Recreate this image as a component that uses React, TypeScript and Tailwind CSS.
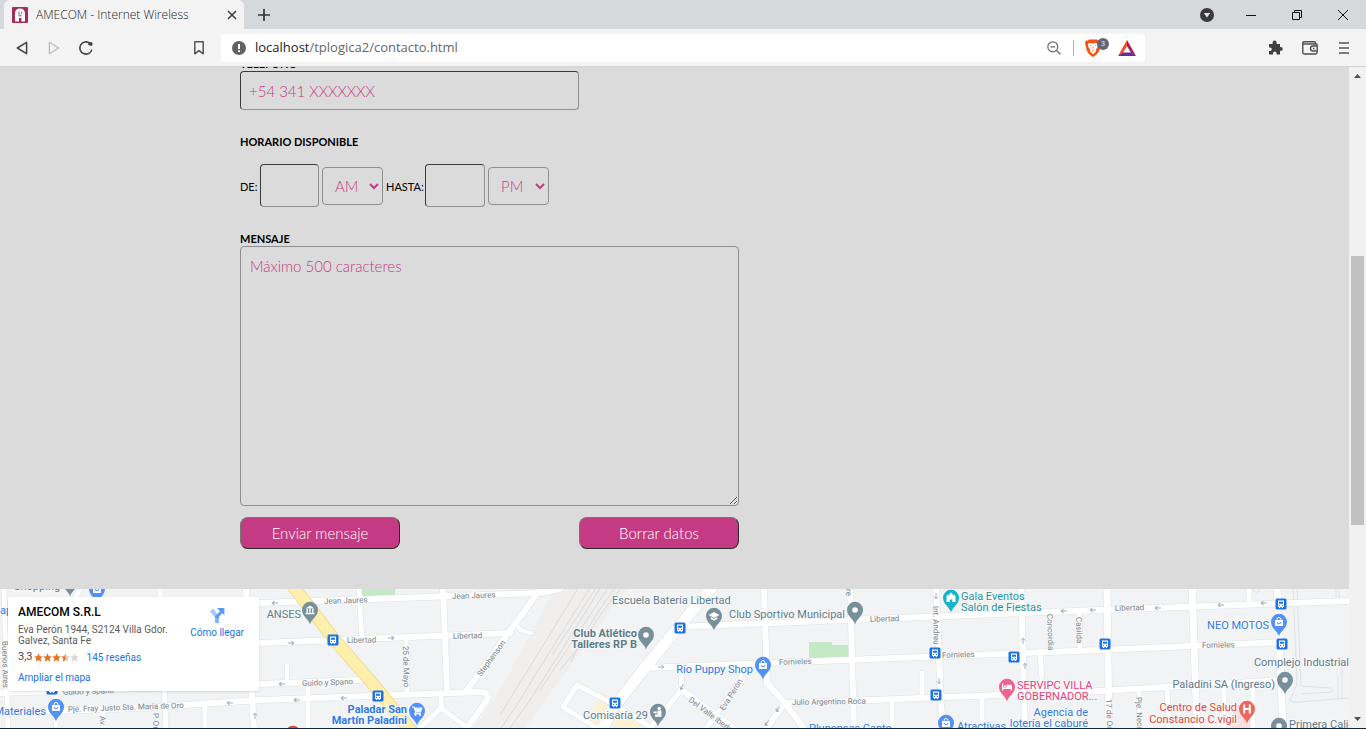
import type { ReactNode } from 'react';

type Point = [number, number];

const STREETS: { d: string; w: number }[] = [
  { d: 'M0 612 L260 603 L540 593 L560 589', w: 6 },
  { d: 'M0 655 L260 643 L510 633', w: 6 },
  { d: 'M443 589 L447 690', w: 6 },
  { d: 'M359 589 L362 640', w: 5 },
  { d: 'M406 640 L407 693', w: 5 },
  { d: 'M0 693 L260 684 L360 680', w: 6 },
  { d: 'M287 665 V684', w: 4 },
  { d: 'M0 713 L140 708 L260 700 L480 692 Q490 692 487 700 L467 728', w: 6 },
  { d: 'M308 685 V730', w: 5 },
  { d: 'M544 584 L467 690', w: 6 },
  { d: 'M508 632 L517 625 L520 630 L531 633', w: 4 },
  { d: 'M441 693 V708 L418 730 M441 708 L470 730', w: 5 },
  { d: 'M4 589 L8 730', w: 5 },
  { d: 'M160 589 L166 730', w: 5 },
  { d: 'M246 589 L254 730', w: 6 },
  { d: 'M103 708 V730 M205 704 V730', w: 5 },
  { d: 'M84 580 L56 640 V730', w: 5 },
  { d: 'M577 685 L615 705 L655 730 M577 685 L563 707 L600 730', w: 5 },
  { d: 'M677 627 L820 621 L1100 610 L1349 601', w: 6 },
  { d: 'M764 589 L767 683 L785 703 L805 730', w: 6 },
  { d: 'M645 668 L820 661 L1100 650 L1283 642', w: 6 },
  { d: 'M785 703 L820 702 L1100 691 L1283 680', w: 6 },
  { d: 'M785 703 L765 730', w: 6 },
  { d: 'M682 670 L681 690 L663 713 L648 730', w: 5 },
  { d: 'M682 690 L736 730', w: 6 },
  { d: 'M741 670 V680 L705 730', w: 5 },
  { d: 'M850 585 L854 730', w: 6 },
  { d: 'M936 585 L941 706 L944 730', w: 6 },
  { d: 'M1021 585 L1025 730', w: 6 },
  { d: 'M1079 612 L1080 650', w: 5 },
  { d: 'M922 673 V697', w: 5 },
  { d: 'M892 702 V730 M982 697 V730', w: 5 },
  { d: 'M1040 653 L1043 692', w: 5 },
  { d: 'M1107 585 L1109 730', w: 7 },
  { d: 'M1192 585 L1197 730', w: 7 },
  { d: 'M1249 585 V603', w: 5 },
  { d: 'M1277 585 L1283 730', w: 7 },
  { d: 'M1139 689 V730 M1167 688 L1169 730 M1224 685 V730 M1253 683 V730', w: 5 },
];

const AVENUE = 'M716 582 L643 670 L612 710 L602 730';
const ROUTE = 'M290 582 L333 638 L378 690 L412 732';

const BUS_STOPS: Point[] = [
  [333, 640], [378, 696], [680, 628], [615, 703], [935, 653], [1014, 657],
  [936, 695], [1105, 644], [1281, 604], [1282, 644], [52, 689],
];

type Glyph = 'dot' | 'bank' | 'cart' | 'cap' | 'bag' | 'person' | 'castle' | 'bed' | 'hospital' | 'none';

const PINS: { x: number; y: number; color: string; glyph: Glyph }[] = [
  { x: 70, y: 582, color: '#78909c', glyph: 'none' },
  { x: 97, y: 589, color: '#5491f5', glyph: 'bag' },
  { x: 56, y: 707, color: '#5491f5', glyph: 'bag' },
  { x: 293, y: 734, color: '#ea4335', glyph: 'none' },
  { x: 310, y: 610, color: '#78909c', glyph: 'bank' },
  { x: 417, y: 711, color: '#5491f5', glyph: 'cart' },
  { x: 646, y: 635, color: '#78909c', glyph: 'dot' },
  { x: 714, y: 616, color: '#78909c', glyph: 'cap' },
  { x: 763, y: 665, color: '#5491f5', glyph: 'bag' },
  { x: 658, y: 712, color: '#78909c', glyph: 'person' },
  { x: 855, y: 610, color: '#78909c', glyph: 'dot' },
  { x: 951, y: 598, color: '#12b5cb', glyph: 'castle' },
  { x: 1007, y: 687, color: '#f06292', glyph: 'bed' },
  { x: 946, y: 723, color: '#5491f5', glyph: 'bag' },
  { x: 1279, y: 622, color: '#5491f5', glyph: 'bag' },
  { x: 1285, y: 680, color: '#78909c', glyph: 'dot' },
  { x: 1247, y: 709, color: '#ee675c', glyph: 'hospital' },
  { x: 1279, y: 726, color: '#78909c', glyph: 'dot' },
];

const GLYPHS: Record<Glyph, ReactNode> = {
  none: null,
  dot: <circle r="2.8" fill="#fff" />,
  bank: <path d="M-4.5 -1.5 L0 -4.5 L4.5 -1.5 Z M-3.5 -1 h1.4 v4 h-1.4z M-0.7 -1 h1.4 v4 h-1.4z M2.1 -1 h1.4 v4 h-1.4z M-4.5 3 h9 v1.3 h-9z" fill="#fff" />,
  cart: (
    <g>
      <path d="M-5 -4 h2 l1.8 5 h4.6 l1.4 -4 h-7.6 M-1.2 1 l-1 1.6 h6" fill="none" stroke="#fff" strokeWidth="1.2" />
      <path d="M-2.5 -2.5 h7 l-1.2 3.2 h-4.6z" fill="#fff" />
      <circle cx="-1.5" cy="4" r="1" fill="#fff" />
      <circle cx="3" cy="4" r="1" fill="#fff" />
    </g>
  ),
  cap: <path d="M-5.5 -1 L0 -4 L5.5 -1 L0 2 Z M-3.2 1 L0 2.9 L3.2 1 V3 L0 4.8 L-3.2 3 Z" fill="#fff" />,
  bag: (
    <g>
      <path d="M-4 -2 h8 v6 h-8z" fill="#fff" />
      <path d="M-1.9 -2 v-0.6 a1.9 1.9 0 0 1 3.8 0 V-2" fill="none" stroke="#fff" strokeWidth="1" />
      <path d="M-1.8 0 a1.8 1.8 0 0 0 3.6 0" fill="none" stroke="#5491f5" strokeWidth="1" />
    </g>
  ),
  person: (
    <g fill="#fff">
      <circle cx="1.2" cy="-3.6" r="1.7" />
      <path d="M-0.6 -1.6 H3.4 V4.8 H-3 V2.4 H-0.6z M-4.6 -0.4 H-1.2 V1.2 H-4.6z" />
    </g>
  ),
  castle: <path d="M-4.5 4 V-2 l1.5 -1.4 l1.3 1.4 V-4 L0 -5.4 L1.7 -4 v2 L3 -3.4 L4.5 -2 V4 H1.2 V1.4 h-2.4 V4z" fill="#fff" />,
  bed: <path d="M-5 -3.5 h1.2 V0.6 h3.3 V-2.2 H3.6 a1.4 1.4 0 0 1 1.4 1.4 V3.6 H3.8 V1.9 h-7.6 v1.7 h-1.2z M-2.2 -1.8 a1 1 0 1 1 0 2 a1 1 0 1 1 0 -2" fill="#fff" />,
  hospital: <path d="M-3.8 -4.5 h2 v3.5 h3.6 v-3.5 h2 v9 h-2 V0.9 h-3.6 v3.6 h-2z" fill="#fff" />,
};

const ARROWS: { x: number; y: number; r: number }[] = [
  { x: 275, y: 603, r: 178 }, { x: 291, y: 643, r: -2 }, { x: 391, y: 638, r: -2 },
  { x: 282, y: 684, r: 178 }, { x: 297, y: 700, r: 178 }, { x: 344, y: 698, r: 178 },
  { x: 230, y: 703, r: 178 }, { x: 255, y: 716, r: -90 }, { x: 661, y: 667, r: 0 },
  { x: 682, y: 687, r: 115 }, { x: 778, y: 709, r: 125 }, { x: 767, y: 723, r: 125 },
  { x: 936, y: 596, r: 90 }, { x: 939, y: 681, r: 90 }, { x: 1023, y: 641, r: -90 },
  { x: 1025, y: 666, r: -90 }, { x: 1064, y: 611, r: 178 }, { x: 1093, y: 610, r: 178 },
  { x: 1158, y: 608, r: 178 }, { x: 1221, y: 605, r: 178 }, { x: 1264, y: 603, r: 178 },
];

type Label = { t: string; x: number; y: number; s: number; c: string; r?: number; a?: 'start' | 'middle' | 'end'; b?: boolean };

const GRAY = '#80868b';
const SLATE = '#5f7c8a';
const BLUE = '#3379e8';

const LABELS: Label[] = [
  { t: 'Jean Jaures', x: 324, y: 604, s: 8, c: GRAY, r: -2 },
  { t: 'Jean Jaures', x: 452, y: 599, s: 8, c: GRAY, r: -2 },
  { t: 'Libertad', x: 347, y: 643, s: 8, c: GRAY, r: -1 },
  { t: 'Libertad', x: 453, y: 639, s: 8, c: GRAY, r: -2 },
  { t: 'Guido y Spano', x: 302, y: 686, s: 8, c: GRAY, r: -2 },
  { t: 'Guido y Spano', x: 63, y: 695, s: 8, c: GRAY, r: -2 },
  { t: 'Pje. Fray Justo Sta. María de Oro', x: 68, y: 712, s: 8, c: GRAY, r: -2 },
  { t: '25 de Mayo', x: 403, y: 646, s: 8, c: GRAY, r: 89 },
  { t: 'Stephenson', x: 481, y: 677, s: 8, c: GRAY, r: -54 },
  { t: 'Buenos Aires', x: 2, y: 641, s: 8, c: GRAY, r: 89 },
  { t: 'Av. Perón', x: 100, y: 716, s: 8, c: GRAY, r: 89 },
  { t: 'P. Oro', x: 153, y: 713, s: 8, c: GRAY, r: 89 },
  { t: 'Eva Perón', x: 724, y: 711, s: 8, c: GRAY, r: -58 },
  { t: 'Del Valle Iberlucea', x: 688, y: 701, s: 8, c: GRAY, r: 37 },
  { t: 'Fornieles', x: 779, y: 665, s: 8, c: GRAY, r: -2 },
  { t: 'Julio Argentino Roca', x: 792, y: 705, s: 8, c: GRAY, r: -1 },
  { t: 'Libertad', x: 870, y: 622, s: 8, c: GRAY, r: -2 },
  { t: 'Fornieles', x: 942, y: 658, s: 8, c: GRAY, r: -2 },
  { t: 're', x: 846, y: 589, s: 8, c: GRAY, r: 89 },
  { t: 'Int. Andreu', x: 933, y: 606, s: 8, c: GRAY, r: 89 },
  { t: 'Concordia', x: 1047, y: 614, s: 8, c: GRAY, r: 88 },
  { t: 'Casilda', x: 1076, y: 617, s: 8, c: GRAY, r: 88 },
  { t: 'Libertad', x: 1115, y: 611, s: 8, c: GRAY, r: -2 },
  { t: 'Fornieles', x: 1202, y: 648, s: 8, c: GRAY, r: -1 },
  { t: '17 de Octubre', x: 1106, y: 699, s: 8, c: GRAY, r: 88 },
  { t: 'Pje. Necochea', x: 1136, y: 697, s: 8, c: GRAY, r: 88 },
  { t: 'Shopping', x: 14, y: 590, s: 11, c: SLATE },
  { t: 'ap', x: 0, y: 614, s: 11, c: BLUE },
  { t: 'Materiales', x: 46, y: 715, s: 11, c: BLUE, a: 'end' },
  { t: 'ANSES', x: 301, y: 618, s: 11, c: SLATE, a: 'end' },
  { t: 'Paladar San', x: 407, y: 713, s: 11, c: BLUE, a: 'end', b: true },
  { t: 'Martín Paladini', x: 407, y: 724, s: 11, c: BLUE, a: 'end', b: true },
  { t: 'Escuela Batería Libertad', x: 612, y: 604, s: 11, c: SLATE },
  { t: 'Club Atlético', x: 637, y: 637, s: 11, c: SLATE, a: 'end', b: true },
  { t: 'Talleres RP B', x: 637, y: 648, s: 11, c: SLATE, a: 'end', b: true },
  { t: 'Club Sportivo Municipal', x: 845, y: 618, s: 11, c: SLATE, a: 'end' },
  { t: 'Río Puppy Shop', x: 753, y: 673, s: 11, c: BLUE, a: 'end' },
  { t: 'Comisaría 29', x: 648, y: 719, s: 11, c: SLATE, a: 'end' },
  { t: 'Plupensas Canto', x: 809, y: 732, s: 11, c: BLUE },
  { t: 'Gala Eventos', x: 961, y: 600, s: 11, c: '#1f949e' },
  { t: 'Salón de Fiestas', x: 961, y: 611, s: 11, c: '#1f949e' },
  { t: 'SERVIPC VILLA', x: 1017, y: 689, s: 11, c: '#e8407c' },
  { t: 'GOBERNADOR...', x: 1017, y: 700, s: 11, c: '#e8407c' },
  { t: 'Agencia de', x: 1088, y: 716, s: 11, c: BLUE, a: 'end' },
  { t: 'lotería el caburé', x: 1088, y: 727, s: 11, c: BLUE, a: 'end' },
  { t: 'Atractivas', x: 957, y: 730, s: 11, c: BLUE },
  { t: 'NEO MOTOS', x: 1269, y: 629, s: 11, c: BLUE, a: 'end' },
  { t: 'Complejo Industrial', x: 1349, y: 666, s: 11, c: SLATE, a: 'end' },
  { t: 'Paladini SA (Ingreso)', x: 1275, y: 688, s: 11, c: SLATE, a: 'end' },
  { t: 'Centro de Salud', x: 1237, y: 711, s: 11, c: '#e2453a', a: 'end' },
  { t: 'Constancio C.vigil', x: 1237, y: 723, s: 11, c: '#e2453a', a: 'end' },
  { t: 'Primera Calidad', x: 1289, y: 728, s: 11, c: SLATE },
];

const RAILS = [
  'M580 585 Q556 625 500 715',
  'M592 585 Q566 625 520 700 L490 745',
  'M602 585 Q575 630 530 700 L505 735',
  'M610 585 Q580 630 540 690',
  'M617 585 Q590 620 571 662',
  'M624 585 Q600 612 585 640 L560 670',
  'M598 585 L552 655',
];

function MapDrawing() {
  return (
    <svg
      className="block h-full w-full"
      viewBox="0 589 1349 139"
      preserveAspectRatio="xMidYMid slice"
      role="img"
      aria-label="Mapa"
      fontFamily="Roboto, sans-serif"
    >
      <rect x="0" y="580" width="1349" height="160" fill="#f1f3f4" />
      <path d="M560 580 H634 L600 625 L560 680 L520 735 H470 L500 690 Z" fill="#f1efed" />
      <path d="M603 692 L612 700 L603 730 H585 L592 712z M622 708 L645 722 L640 730 H612z" fill="#fdf1d3" />
      <path d="M362 588 h33 v8 h-33z M809 642 h23 v3 h18 v13 l-41 1z" fill="#c5e8c5" />
      <path d="M1235 705 h18 v25 h-22z" fill="#fbe0dd" />
      <g fill="none" stroke="#d3d7da" strokeWidth="0.9">
        {RAILS.map((d) => <path key={d} d={d} />)}
      </g>
      <g fill="none" stroke="#dfe2e5" strokeWidth="1">
        <path d="M1293 589 L1297 684 L1290 700 Q1291 703 1298 702 L1349 698" />
        <path d="M1297 589 L1301 686 L1330 688 Q1335 690 1331 692 L1302 694 M1336 589 V602 M1339 589 V600 M1338 675 V698 M1342 668 V698 M1253 589 Q1256 596 1260 589" />
      </g>
      <g fill="none" stroke="#dde0e3" strokeLinecap="round" strokeLinejoin="round">
        {STREETS.map((s) => <path key={s.d} d={s.d} strokeWidth={s.w + 1} />)}
        <path d={AVENUE} strokeWidth="12" />
      </g>
      <g fill="none" stroke="#ffffff" strokeLinecap="round" strokeLinejoin="round">
        {STREETS.map((s) => <path key={s.d} d={s.d} strokeWidth={s.w} />)}
        <path d={AVENUE} strokeWidth="11" />
      </g>
      <path d={ROUTE} fill="none" stroke="#f5dc93" strokeWidth="13" />
      <path d={ROUTE} fill="none" stroke="#fdefac" strokeWidth="11" />
      {ARROWS.map((a) => (
        <path
          key={`${a.x}-${a.y}`}
          transform={`translate(${a.x} ${a.y}) rotate(${a.r})`}
          d="M-3 0 H2.6 M0.6 -2 L2.8 0 L0.6 2"
          fill="none"
          stroke="#a3acc4"
          strokeWidth="1"
        />
      ))}
      {BUS_STOPS.map(([x, y]) => (
        <g key={`${x}-${y}`} transform={`translate(${x} ${y})`}>
          <rect x="-5.5" y="-5.5" width="11" height="11" rx="1.5" fill="#1a73e8" />
          <path d="M-3 -3.5 h6 v6.5 h-1 v1 h-1.2 v-1 h-1.6 v1 h-1.2 v-1 h-1z" fill="#fff" />
          <path d="M-2 -2.2 h4 v2 h-4z M-2 1 h1 v1 h-1z M1 1 h1 v1 h-1z" fill="#1a73e8" />
        </g>
      ))}
      {PINS.map((p) => (
        <g key={`${p.x}-${p.y}`} transform={`translate(${p.x} ${p.y})`}>
          <path d="M0 14.5 C-1 9.5 -8 6.5 -8 -0.2 A8 8 0 0 1 8 -0.2 C8 6.5 1 9.5 0 14.5z" fill={p.color} />
          {GLYPHS[p.glyph]}
        </g>
      ))}
      {LABELS.map((l) => (
        <text
          key={`${l.t}-${l.x}`}
          transform={`translate(${l.x} ${l.y}) rotate(${l.r ?? 0})`}
          fontSize={l.s}
          fill={l.c}
          fontWeight={l.b ? 700 : 400}
          textAnchor={l.a ?? 'start'}
          stroke="#f7f8f9"
          strokeWidth="2"
          paintOrder="stroke"
        >
          {l.t}
        </text>
      ))}
    </svg>
  );
}

function Star({ fill }: { fill: string }) {
  return (
    <svg viewBox="0 0 10 10" className="size-[9px]" aria-hidden="true">
      <path d="M5 0.3 L6.4 3.5 L9.9 3.8 L7.3 6.1 L8.1 9.6 L5 7.7 L1.9 9.6 L2.7 6.1 L0.1 3.8 L3.6 3.5z" fill={fill} />
    </svg>
  );
}

function InfoCard() {
  return (
    <div className="absolute top-2 left-2 flex h-[94px] w-[251px] justify-between rounded-xs bg-white pt-2 pr-[15px] pl-[10px] font-[Roboto,sans-serif] text-[10px] shadow-sm">
      <div>
        <h2 className="text-[12px] leading-[14px] font-medium text-black">AMECOM S.R.L</h2>
        <p className="mt-[5px] w-[152px] text-[10px] leading-[11px] text-[#5b5b5b]">Eva Perón 1944, S2124 Villa Gdor. Galvez, Santa Fe</p>
        <div className="mt-[3px] flex h-4 items-center">
          <span className="mr-px text-[11px] text-[#444]">3,3</span>
          <Star fill="#e7711b" />
          <Star fill="#e7711b" />
          <Star fill="#e7711b" />
          <svg viewBox="0 0 10 10" className="size-[9px]" aria-hidden="true">
            <path d="M5 0.3 L6.4 3.5 L9.9 3.8 L7.3 6.1 L8.1 9.6 L5 7.7z" fill="#d0d0d0" />
            <path d="M5 0.3 L3.6 3.5 L0.1 3.8 L2.7 6.1 L1.9 9.6 L5 7.7z" fill="#e7711b" />
          </svg>
          <Star fill="#d8d8d8" />
          <a href="#resenas" className="ml-2 text-[#1a73e8]">145 reseñas</a>
        </div>
        <a href="#mapa" className="mt-[6px] block leading-[14px] text-[#1a73e8]">Ampliar el mapa</a>
      </div>
      <a href="#ruta" className="flex flex-col items-center gap-[3px] pt-[2px] text-[#1a73e8]">
        <svg viewBox="0 0 16 16" className="size-4" aria-hidden="true">
          <path d="M6 16 V10.5 L0.8 4.2 L3.8 1.6 L8.6 7.2 L10 9 V16z" fill="#a6c8f8" />
          <path d="M6 16 V9.4 L11 4.2 L8 1 H15.4 V8 L13 6.2 L10 9.8 V16z" fill="#5b9af5" />
          <path d="M6 16 V11 h4 V16z" fill="#8ab8f7" />
        </svg>
        <span className="leading-[14px]">Cómo llegar</span>
      </a>
    </div>
  );
}

function TabStrip() {
  return (
    <div className="flex h-[29px] shrink-0 items-stretch bg-[#d5d9dc] pl-1">
      <div className="flex w-60 items-center rounded-t-md bg-[#f3f3f3] pr-[7px] pl-2">
        <svg viewBox="0 0 16 16" className="size-4" aria-hidden="true">
          <rect width="16" height="16" rx="1" fill="#a62c56" />
          <path d="M3 14.4 V6.4 Q3.2 1.6 8 1.6 Q12.8 1.6 13 6.4 V14.4 H9.4 V11 H7 V14.4z" fill="#fff" />
          <path d="M6.6 4.8 h0.9 v4.4 h-0.9z M9 4.8 h0.8 v2 h-0.8z M8.2 8 h1.2 v1.6 h-1.2z" fill="#a62c56" />
        </svg>
        <span className="ml-2 flex-1 text-[12px] font-light whitespace-nowrap text-[#1c1c1c]">AMECOM - Internet Wireless</span>
        <button type="button" aria-label="Cerrar pestaña" className="size-[10px]">
          <svg viewBox="0 0 10 10"><path d="M1 1 L9 9 M9 1 L1 9" stroke="#3a3a3a" strokeWidth="1.5" /></svg>
        </button>
      </div>
      <button type="button" aria-label="Nueva pestaña" className="ml-[14px] w-3">
        <svg viewBox="0 0 12 12" className="size-3"><path d="M6 0 V12 M0 6 H12" stroke="#333" strokeWidth="1.7" /></svg>
      </button>
      <div className="ml-auto flex items-center pr-[18px]">
        <button type="button" aria-label="Buscar pestañas">
          <svg viewBox="0 0 14 14" className="size-[14px]"><circle cx="7" cy="7" r="7" fill="#3b3b3b" /><path d="M3.8 5 H10.2 L7 9.4z" fill="#e4e6e8" /></svg>
        </button>
        <button type="button" aria-label="Minimizar" className="ml-8">
          <svg viewBox="0 0 10 10" className="size-[10px]"><path d="M0 5.5 H10" stroke="#111" /></svg>
        </button>
        <button type="button" aria-label="Restaurar" className="ml-9">
          <svg viewBox="0 0 10 10" className="size-[10px]"><path d="M0.5 2.5 h7 v7 h-7z M2.5 2.5 V0.5 h7 v7 h-2" fill="none" stroke="#111" /></svg>
        </button>
        <button type="button" aria-label="Cerrar" className="ml-9">
          <svg viewBox="0 0 10 10" className="size-[10px]"><path d="M0 0 L10 10 M10 0 L0 10" stroke="#111" /></svg>
        </button>
      </div>
    </div>
  );
}

function Toolbar() {
  return (
    <div className="flex h-[38px] shrink-0 items-center border-b border-[#d6d6d6] bg-[#f3f3f3] pl-4">
      <button type="button" aria-label="Atrás">
        <svg viewBox="0 0 12 14" className="h-[14px] w-3"><path d="M10.6 1.3 V12.7 L1.3 7z" fill="none" stroke="#444" strokeWidth="1.5" strokeLinejoin="round" /></svg>
      </button>
      <button type="button" aria-label="Adelante" className="ml-5">
        <svg viewBox="0 0 12 14" className="h-[14px] w-3"><path d="M1.4 1.3 V12.7 L10.7 7z" fill="none" stroke="#bcbcbc" strokeWidth="1.3" strokeLinejoin="round" /></svg>
      </button>
      <button type="button" aria-label="Recargar" className="ml-[19px]">
        <svg viewBox="0 0 14 14" className="size-[14px]">
          <path d="M12.9 8.6 A6.1 6.1 0 1 1 10.8 2.2" fill="none" stroke="#444" strokeWidth="1.6" />
          <path d="M8.8 3.6 L10 1.4 Q13.6 0 13.6 3 Q13.4 5.4 11.4 4.8z" fill="#444" />
        </svg>
      </button>
      <button type="button" aria-label="Marcador" className="ml-[101px]">
        <svg viewBox="0 0 10 14" className="h-[14px] w-[10px]"><path d="M0.8 0.8 H9.2 V12.8 L5 9.6 L0.8 12.8z" fill="none" stroke="#555" strokeWidth="1.5" strokeLinejoin="round" /></svg>
      </button>
      <div className="ml-[17px] flex h-7 flex-1 items-center rounded-sm bg-white pr-[9px] pl-[11px]">
        <svg viewBox="0 0 14 14" className="size-[14px] shrink-0" aria-hidden="true">
          <circle cx="7" cy="7" r="7" fill="#5f6368" />
          <path d="M6 3 H8 V8 H6z M6 9.2 H8 V11 H6z" fill="#fff" />
        </svg>
        <a href="#url" className="ml-[9px] flex-1 text-[13px] whitespace-nowrap text-[#666]">
          <span className="text-[#222]">localhost</span>/tplogica2/contacto.html
        </a>
        <svg viewBox="0 0 14 14" className="size-[14px] shrink-0" aria-hidden="true">
          <circle cx="5.8" cy="5.8" r="5" fill="none" stroke="#6b6b6b" strokeWidth="1.2" />
          <path d="M3.4 5.8 H8.2 M9.5 9.5 L13.5 13.3" stroke="#6b6b6b" strokeWidth="1.3" />
        </svg>
        <span className="ml-3 h-4 w-px bg-[#b4b4b4]" />
        <div className="relative ml-[11px] h-[18px] w-4">
          <svg viewBox="0 0 16 18" className="h-[18px] w-4" aria-hidden="true">
            <path d="M4 0.4 H12 L13.4 1.8 L15.2 1.6 L16 4 L15.2 7 Q14.6 12 13 14 Q11 16.4 8 18 Q5 16.4 3 14 Q1.4 12 0.8 7 L0 4 L0.8 1.6 L2.6 1.8z" fill="#fb5012" />
            <path d="M3 4.4 L5.6 4 L8 4.6 L10.4 4 L13 4.4 L12.6 8 L10.8 10.8 L11 12.4 L8 15.2 L5 12.4 L5.2 10.8 L3.4 8z" fill="#fff" />
            <path d="M4.6 6 L6.8 6.5 L6 7.3z M11.4 6 L9.2 6.5 L10 7.3z M7.6 7.4 h0.8 v2.2 H7.6z M6.2 11 L8 11.8 L9.8 11 L8 12.8z" fill="#fb6a35" />
          </svg>
          <span className="absolute -top-px left-3 flex size-3 items-center justify-center rounded-md bg-[#63657a] text-[7px] leading-none text-white">3</span>
        </div>
        <svg viewBox="0 0 18 16" className="ml-[17px] h-4 w-[18px] shrink-0" aria-hidden="true">
          <path d="M9 0 L0 16 L5 12.8 L9 6z" fill="#ff4724" />
          <path d="M9 0 L18 16 L13 12.8 L9 6z" fill="#9e1f63" />
          <path d="M0 16 L5 12.6 H13 L18 16z" fill="#662d91" />
        </svg>
      </div>
      <div className="ml-[123px] flex items-center pr-[17px]">
        <button type="button" aria-label="Extensiones">
          <svg viewBox="0 0 15 15" className="size-[15px]">
            <path d="M1 4 H4.6 V2.4 A2 2 0 0 1 8.6 2.4 V4 H12 V7 H12.8 A1.9 1.9 0 0 1 12.8 10.8 H12 V14.6 H8.6 V13.4 A1.8 1.8 0 0 0 5 13.4 V14.6 H1 V11 H2 A1.8 1.8 0 0 0 2 7.4 H1z" fill="#3f3f3f" />
          </svg>
        </button>
        <button type="button" aria-label="Cartera" className="ml-[19px]">
          <svg viewBox="0 0 16 14" className="h-[14px] w-4" fill="none" stroke="#505050" strokeWidth="1.4">
            <path d="M15 4.6 V3.6 Q15 3 14.2 3 H2 Q0.8 3 0.8 1.9 Q0.8 0.8 2 0.8 H12.4 Q13.4 0.8 13.4 1.8 V3 M0.8 1.9 V11.6 Q0.8 13 2.2 13 H13.6 Q15 13 15 11.6 V10.4" />
            <path d="M15.2 5 H11 A2.5 2.5 0 0 0 11 10 H15.2z M11 7.5 H12.4" />
          </svg>
        </button>
        <button type="button" aria-label="Menú" className="ml-[21px]">
          <svg viewBox="0 0 10 12" className="h-3 w-[10px]"><path d="M0 1 H10 M0 6 H10 M0 11 H10" stroke="#555" strokeWidth="1.5" /></svg>
        </button>
      </div>
    </div>
  );
}

const FIELD = 'rounded-[4px] border border-t-[#3b3b3b] border-r-[#8f8f8f] border-b-[#8f8f8f] border-l-[#3b3b3b] bg-transparent px-2 text-[15px] font-light text-[#c53b83] outline-none placeholder:text-[#c53b83] placeholder:opacity-100';
const SELECT = 'h-[38px] w-[61px] rounded-[4px] border border-[#8f8f8f] bg-transparent px-2 text-[15px] font-light text-[#c53b83]';
const BUTTON = 'h-8 w-40 rounded-lg border border-t-[#767676] border-r-[#2a2a2a] border-b-[#2a2a2a] border-l-[#767676] bg-[#c53b83] text-[15px] font-light text-white';

function ContactForm() {
  return (
    <form className="mx-auto w-full max-w-[869px] pb-10 text-[11px] text-black" onSubmit={(e) => e.preventDefault()}>
      <div className="flex h-1 items-end overflow-hidden">
        <label htmlFor="telefono" className="leading-[15px] font-bold">TELÉFONO</label>
      </div>
      <input id="telefono" type="tel" placeholder="+54 341 XXXXXXX" className={`block h-[39px] w-[339px] ${FIELD}`} />
      <h3 className="mt-6 leading-4 font-bold">HORARIO DISPONIBLE</h3>
      <div className="mt-[14px] flex items-center gap-[3px]">
        <label htmlFor="desde" className="w-[17px] pt-[3px] whitespace-nowrap">DE:</label>
        <input id="desde" type="text" className={`h-[43px] w-[59px] ${FIELD}`} />
        <select aria-label="Turno desde" defaultValue="AM" className={SELECT}>
          <option>AM</option>
          <option>PM</option>
        </select>
        <label htmlFor="hasta" className="w-9 pt-[3px] whitespace-nowrap">HASTA:</label>
        <input id="hasta" type="text" className={`h-[43px] w-[60px] ${FIELD}`} />
        <select aria-label="Turno hasta" defaultValue="PM" className={SELECT}>
          <option>AM</option>
          <option>PM</option>
        </select>
      </div>
      <label htmlFor="mensaje" className="mt-6 block leading-[15px] font-bold">MENSAJE</label>
      <textarea
        id="mensaje"
        placeholder="Máximo 500 caracteres"
        className="block h-[260px] w-[499px] resize rounded-[4px] border border-[#8f8f8f] bg-transparent px-[9px] py-[9px] text-[15px] leading-5 font-light text-[#c53b83] placeholder:text-[#c53b83] placeholder:opacity-100"
      />
      <div className="mt-[11px] flex w-[499px] justify-between">
        <button type="submit" className={BUTTON}>Enviar mensaje</button>
        <button type="reset" className={BUTTON}>Borrar datos</button>
      </div>
    </form>
  );
}

function Scrollbar() {
  return (
    <div className="flex w-[17px] shrink-0 flex-col items-center bg-[#f1f1f1]" aria-hidden="true">
      <svg viewBox="0 0 17 17" className="size-[17px] shrink-0"><path d="M5 11 L8.5 7 L12 11z" fill="#505050" /></svg>
      <div className="flex-[172]" />
      <div className="w-[13px] flex-[269] bg-[#c1c1c1]" />
      <div className="flex-[186]" />
      <svg viewBox="0 0 17 17" className="size-[17px] shrink-0"><path d="M5 6 L8.5 10 L12 6z" fill="#505050" /></svg>
    </div>
  );
}

export default function App() {
  return (
    <div className="flex h-screen flex-col overflow-hidden border-b border-[#04283f] font-['Open_Sans',sans-serif]">
      <TabStrip />
      <Toolbar />
      <div className="flex min-h-0 flex-1">
        <main className="flex min-w-0 flex-1 flex-col bg-[#dbdbdb] font-[Lato,sans-serif]">
          <ContactForm />
          <section className="relative min-h-0 flex-1 overflow-hidden">
            <MapDrawing />
            <InfoCard />
          </section>
        </main>
        <Scrollbar />
      </div>
    </div>
  );
}
